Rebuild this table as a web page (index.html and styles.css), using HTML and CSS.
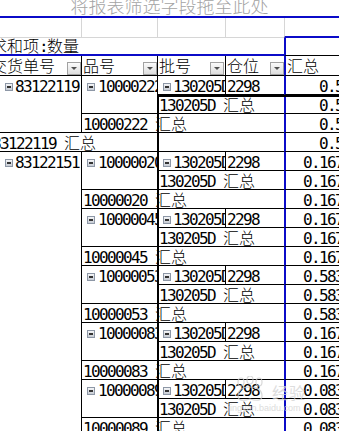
FILE: index.html
```html
<!DOCTYPE html>
<html lang="zh">
<head>
<meta charset="utf-8">
<title>数据透视表</title>
<link rel="stylesheet" href="styles.css">
</head>
<body>
<div class="sheet">
  <div class="dropzone">将报表筛选字段拖至此处</div>
  <div class="pivot">
    <div class="g"></div><div class="g"></div><div class="g"></div><div class="g nr"></div><div class="g g5"></div>

    <div class="sum s4"><span class="k">求和项</span>:<span class="k">数量</span></div>
    <div class="vc"></div>

    <div class="h h1"><span class="ht"><span class="k">交货单号</span></span><i class="dd"></i></div>
    <div class="h h2"><span class="ht"><span class="k">品号</span></span><i class="dd"></i></div>
    <div class="h h3"><span class="ht"><span class="k">批号</span></span><i class="dd"></i></div>
    <div class="h h4 nr"><span class="ht"><span class="k">仓位</span></span><i class="dd"></i></div>
    <div class="hv"><span class="k">汇总</span></div>

    <div class="c a1 r3"><i class="ex"></i>83122119</div>
    <div class="c a2 r2"><i class="ex"></i>10000222</div>
    <div class="c a3"><i class="ex"></i>130205D</div>
    <div class="c a4 nr">2298</div>
    <div class="v">0.5</div>
    <div class="c t3 s2 nr">130205D <span class="k">汇总</span></div>
    <div class="v">0.5</div>
    <div class="c t2 s3 nr">10000222 <span class="k">汇总</span></div>
    <div class="v">0.5</div>
    <div class="c t1 s4 nr">83122119 <span class="k">汇总</span></div>
    <div class="v">0.5</div>

    <div class="c a1 r15"><i class="ex"></i>83122151</div>
    <div class="c a2 r2"><i class="ex"></i>10000020</div>
    <div class="c a3"><i class="ex"></i>130205D</div>
    <div class="c a4 nr">2298</div>
    <div class="v">0.167</div>
    <div class="c t3 s2 nr">130205D <span class="k">汇总</span></div>
    <div class="v">0.167</div>
    <div class="c t2 s3 nr">10000020 <span class="k">汇总</span></div>
    <div class="v">0.167</div>

    <div class="c a2 r2"><i class="ex"></i>10000045</div>
    <div class="c a3"><i class="ex"></i>130205D</div>
    <div class="c a4 nr">2298</div>
    <div class="v">0.167</div>
    <div class="c t3 s2 nr">130205D <span class="k">汇总</span></div>
    <div class="v">0.167</div>
    <div class="c t2 s3 nr">10000045 <span class="k">汇总</span></div>
    <div class="v">0.167</div>

    <div class="c a2 r2"><i class="ex"></i>10000053</div>
    <div class="c a3"><i class="ex"></i>130205D</div>
    <div class="c a4 nr">2298</div>
    <div class="v">0.583</div>
    <div class="c t3 s2 nr">130205D <span class="k">汇总</span></div>
    <div class="v">0.583</div>
    <div class="c t2 s3 nr">10000053 <span class="k">汇总</span></div>
    <div class="v">0.583</div>

    <div class="c a2 r2"><i class="ex"></i>10000083</div>
    <div class="c a3"><i class="ex"></i>130205D</div>
    <div class="c a4 nr">2298</div>
    <div class="v">0.167</div>
    <div class="c t3 s2 nr">130205D <span class="k">汇总</span></div>
    <div class="v">0.167</div>
    <div class="c t2 s3 nr">10000083 <span class="k">汇总</span></div>
    <div class="v">0.167</div>

    <div class="c a2 r2"><i class="ex"></i>10000089</div>
    <div class="c a3"><i class="ex"></i>130205D</div>
    <div class="c a4 nr">2298</div>
    <div class="v">0.083</div>
    <div class="c t3 s2 nr">130205D <span class="k">汇总</span></div>
    <div class="v">0.083</div>
    <div class="c t2 s3 nr">10000089 <span class="k">汇总</span></div>
    <div class="v">0.083</div>

    <div class="active"></div>
  </div>
  <div class="wm">
    <svg class="paw" width="36" height="26" viewBox="0 0 36 26">
      <g fill="none" stroke="#cdcdcd" stroke-width="1.2">
        <ellipse cx="9" cy="6" rx="3" ry="4"/>
        <ellipse cx="18" cy="4" rx="3" ry="4"/>
        <ellipse cx="27" cy="6" rx="3" ry="4"/>
        <path d="M6 20 C6 13 12 11 18 11 C24 11 30 13 30 20 C30 25 24 25 18 23 C12 25 6 25 6 20 Z"/>
      </g>
    </svg>
    <span class="wm-t">经验</span>
    <span class="wm-u">jingyan.baidu.com</span>
  </div>
</div>
</body>
</html>
```
FILE: styles.css
```css
* { box-sizing: border-box; }
html, body { margin: 0; padding: 0; background: #fff; }
body {
  width: 339px;
  height: 431px;
  overflow: hidden;
  position: relative;
  font-family: "DejaVu Sans Mono", "Noto Sans CJK SC", monospace;
  font-size: 16px;
  letter-spacing: -1.63px;
  color: #000;
}
.sheet { width: 339px; height: 431px; overflow: hidden; }

.dropzone {
  height: 18px;
  border-bottom: 2px solid #0b0bc8;
  text-align: center;
  font-family: "Noto Sans CJK SC", sans-serif;
  font-size: 18px;
  font-weight: 300;
  line-height: 10px;
  letter-spacing: 0;
  color: #a4a4a4;
  white-space: nowrap;
}

.pivot {
  display: grid;
  grid-template-columns: 95px 76px 68px 58px 63px;
  grid-template-rows: 20px 18px 20px;
  grid-auto-rows: 19px;
  width: 360px;
  margin-left: -13px;
  position: relative;
}

.k {
  font-family: "Noto Sans CJK SC", sans-serif;
  font-size: 16px;
  font-weight: 300;
  letter-spacing: 0;
  line-height: 14px;
}

.s2 { grid-column: span 2; }
.s3 { grid-column: span 3; }
.s4 { grid-column: span 4; }
.r2 { grid-row: span 2; }
.r3 { grid-row: span 3; }
.r15 { grid-row: span 15; }

/* empty sheet row */
.g { border-right: 1px solid #d6d6d6; border-bottom: 1px solid #d6d6d6; }
.g.nr { border-right: 0; }
.g.g5 { border-right: 0; border-left: 1px solid #d6d6d6; border-bottom: 2px solid #0b0bc8; }

/* data label row */
.sum {
  border-bottom: 2px solid #0b0bc8;
  line-height: 16px;
  padding-left: 4px;
  white-space: nowrap;
}
.vc { border-left: 2px solid #0b0bc8; border-bottom: 1px solid #000; }

/* header row */
.h {
  display: flex;
  justify-content: space-between;
  align-items: flex-start;
  border-right: 1px solid #000;
  border-bottom: 1px solid #000;
  padding-top: 2px;
}
.h .ht { line-height: 18px; white-space: nowrap; }
.h1 { padding-left: 4px; }
.h2, .h3, .h4 { padding-left: 1px; }
.h3 .dd { margin-right: 1px; }
.hv {
  border-left: 2px solid #0b0bc8;
  border-bottom: 1px solid #000;
  padding: 2px 0 0 1px;
  line-height: 18px;
}
.dd {
  flex: none;
  align-self: flex-end;
  width: 14px;
  height: 13px;
  border: 1px solid #a2a2a2;
  background: linear-gradient(#fbfbfb, #dedede);
  position: relative;
}
.dd::after {
  content: "";
  position: absolute;
  left: 3px;
  top: 4px;
  border-left: 3px solid transparent;
  border-right: 3px solid transparent;
  border-top: 3px solid #505050;
}

/* body cells */
.c {
  border-right: 1px solid #000;
  border-bottom: 1px solid #000;
  line-height: 18px;
  padding-top: 2px;
  white-space: nowrap;
  overflow: hidden;
}
.nr { border-right: 0; }
.a1 { padding-left: 18px; }
.a2 { padding-left: 5px; }
.a3 { padding-left: 5px; }
.a4 { padding-left: 1px; }
.t1 { padding-left: 5px; }
.t2, .t3 { padding-left: 1px; }
.a2 .ex { margin-right: 3px; }

.ex {
  display: inline-block;
  width: 8px;
  height: 8px;
  margin-right: 2px;
  border: 1px solid #8d97a6;
  background: linear-gradient(#f5f6f8, #c6cbd3);
  vertical-align: 1px;
  position: relative;
}
.ex::after {
  content: "";
  position: absolute;
  left: 1px;
  top: 2px;
  width: 4px;
  height: 2px;
  background: #333;
}

.v {
  border-left: 2px solid #0b0bc8;
  border-bottom: 1px solid #000;
  text-align: right;
  padding: 2px 4px 0 0;
  line-height: 18px;
  white-space: nowrap;
  overflow: hidden;
}

/* active cell selection */
.active {
  position: absolute;
  grid-column: 3;
  grid-row: 5;
  left: -1px;
  top: 0;
  right: 0;
  bottom: 1px;
  border: 2px solid #000;
  pointer-events: none;
}
.active::before {
  content: "";
  position: absolute;
  right: -4px;
  top: 0;
  width: 4px;
  height: 12px;
  background: #000;
}
.active::after {
  content: "";
  position: absolute;
  right: -4px;
  bottom: -4px;
  width: 6px;
  height: 6px;
  background: #000;
  border: 1px solid #fff;
}

/* faint site watermark */
.wm {
  position: absolute;
  left: 228px;
  top: 374px;
  width: 90px;
  height: 40px;
  opacity: 0.75;
  pointer-events: none;
}
.paw { position: absolute; left: 4px; top: 2px; }
.wm-t {
  position: absolute;
  left: 44px;
  top: 9px;
  font-family: "Noto Sans CJK SC", sans-serif;
  font-size: 16px;
  line-height: 18px;
  letter-spacing: 1px;
  color: #d2d2d2;
}
.wm-u {
  position: absolute;
  left: 0;
  top: 29px;
  font-family: "Liberation Sans", sans-serif;
  font-size: 9px;
  line-height: 10px;
  letter-spacing: 0;
  color: #d2d2d2;
}
```
